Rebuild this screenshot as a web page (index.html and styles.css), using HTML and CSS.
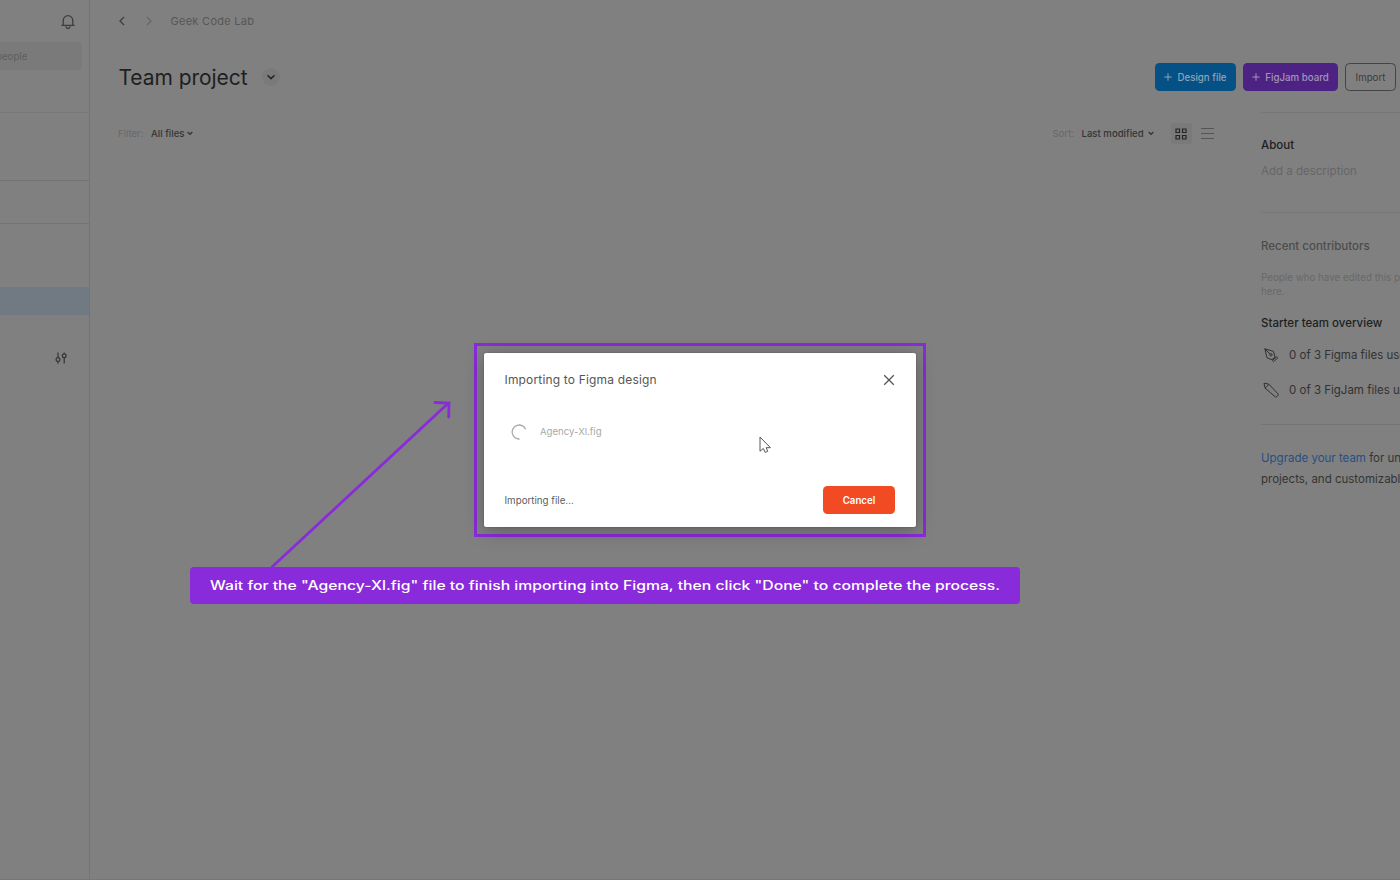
FILE: index.html
```html
<!DOCTYPE html>
<html lang="en">
<head>
<meta charset="utf-8">
<title>Team project</title>
<link rel="stylesheet" href="styles.css">
</head>
<body>
<div class="app">
  <aside class="sidebar">
    <div class="side-top">
      <svg class="bell" width="16" height="16" viewBox="0 0 16 16"><path d="M3.2 11.3V6.500a4.800 4.800 0 0 1 9.600 0v4.800M1.300 11.400h13.400M5.800 12.400c.3 1.500 1.200 2.100 2.200 2.100s1.900-.6 2.200-2.100"/></svg>
      <div class="search">people</div>
    </div>
    <div class="side-links"></div>
    <div class="side-drafts"></div>
    <div class="side-teams">
      <div class="selected"></div>
      <svg class="sliders" width="12" height="12" viewBox="0 0 12 12"><path d="M3 .5v5M3 9.700v2M9.200 6v5.500M9.200.4v1.300"/><circle cx="3" cy="7.600" r="1.900"/><circle cx="9.200" cy="3.800" r="1.900"/></svg>
    </div>
  </aside>
  <div class="page">
    <nav class="crumbs">
      <svg width="8" height="10" viewBox="0 0 8 10"><path d="M6 1 2 5l4 4"/></svg>
      <svg class="next" width="8" height="10" viewBox="0 0 8 10"><path d="m2 1 4 4-4 4"/></svg>
      <span>Geek Code Lab</span>
    </nav>
    <header class="header">
      <h1>Team project</h1>
      <span class="round"><svg width="10" height="8" viewBox="0 0 10 8"><path d="m1.500 2.200 3.500 3.400 3.500-3.400"/></svg></span>
      <div class="actions">
        <button class="btn blue"><svg width="8" height="8" viewBox="0 0 8 8"><path d="M4 .3v7.400M.3 4h7.400"/></svg><span>Design file</span></button>
        <button class="btn violet"><svg width="8" height="8" viewBox="0 0 8 8"><path d="M4 .3v7.400M.3 4h7.400"/></svg><span>FigJam board</span></button>
        <button class="btn outline"><span>Import</span></button>
      </div>
    </header>
    <div class="columns">
      <main class="files">
        <div class="filters">
          <span class="faint">Filter:</span>
          <span class="choice filter">All files</span>
          <svg class="caret" width="6" height="5" viewBox="0 0 6 5"><path d="m.6 1 2.400 2.300L5.400 1"/></svg>
          <span class="faint sort-label">Sort:</span>
          <span class="choice sort">Last modified</span>
          <svg class="caret" width="6" height="5" viewBox="0 0 6 5"><path d="m.6 1 2.400 2.300L5.400 1"/></svg>
          <span class="grid-view"><svg width="12" height="12" viewBox="0 0 12 12"><path d="M1 1h3.500v3.500H1zM7.500 1H11v3.500H7.500zM1 7.500h3.500V11H1zM7.500 7.500H11V11H7.500z"/></svg></span>
          <svg class="list-view" width="13" height="11" viewBox="0 0 13 11"><path d="M0 .5h13M0 5.500h13M0 10.500h13"/></svg>
        </div>
      </main>
      <aside class="details">
        <section class="about">
          <h2>About</h2>
          <p>Add a description</p>
        </section>
        <section class="team">
          <h3>Recent contributors</h3>
          <p class="note">People who have edited this project<br>here.</p>
          <h2 class="overview">Starter team overview</h2>
          <div class="quota">
            <svg width="16" height="16" viewBox="0 0 16 16"><path d="m1.800 1.800 8.700 2.600 1.500 5.800-3 2.500L4 10.800zM1.800 1.800l5.400 5.400M9.300 13.500l4.300-3.800 1 1.400-4.100 3.500z"/><circle cx="8" cy="7.800" r="1.100"/></svg>
            <span>0 of 3 Figma files used</span>
          </div>
          <div class="quota jam">
            <svg width="16" height="16" viewBox="0 0 16 16"><path d="m1 1.200 4.800.9 9.100 9.600c1.200 1.500-1.300 4.200-2.900 2.900L2 6zM2.200 6 6 2.300"/></svg>
            <span>0 of 3 FigJam files used</span>
          </div>
        </section>
        <p class="upgrade"><a>Upgrade your team</a> for unlimited<br>projects, and customizable</p>
      </aside>
    </div>
  </div>
</div>

<div class="highlight">
  <div class="dialog">
    <div class="dialog-head">
      <span class="dialog-title">Importing to Figma design</span>
      <svg width="12" height="12" viewBox="0 0 12 12"><path d="m1.200 1.200 9.600 9.600m0-9.600-9.600 9.600"/></svg>
    </div>
    <div class="dialog-file">
      <svg width="16" height="16" viewBox="0 0 16 16"><path d="M14.600 5.200A7 7 0 1 0 8.600 15"/></svg>
      <span>Agency-Xl.fig</span>
    </div>
    <div class="dialog-foot">
      <span class="status">Importing file...</span>
      <button class="cancel"><span>Cancel</span></button>
    </div>
  </div>
</div>
<svg class="cursor" width="13" height="18" viewBox="0 0 13 18"><path d="M1 1v14.200l3.300-2.700 1.900 3.900 2.500-1.100-1.500-3.600h4.200z"/></svg>
<svg class="arrow" width="190" height="176" viewBox="0 0 190 176"><path d="M6 172 182.500 8M169 7.500l14 .5-.3 14"/></svg>
<div class="caption">
  <svg width="790" height="24" viewBox="0 0 790 24"><text x="0" y="16.500" textLength="790" lengthAdjust="spacingAndGlyphs">Wait for the "Agency-Xl.fig" file to finish importing into Figma, then click "Done" to complete the process.</text></svg>
</div>
</body>
</html>
```

FILE: styles.css
```css
* { box-sizing: border-box; }
body { margin: 0; width: 1400px; height: 880px; overflow: hidden; background: #808080; font-family: Inter, "Liberation Sans", sans-serif; color: #2b2b2b; }
h1, h2, h3, p { margin: 0; }
svg { display: block; flex: none; fill: none; stroke: currentColor; }
button { font: inherit; border: 0; padding: 0; }
.app { display: flex; width: 1400px; height: 880px; overflow: hidden; border-bottom: 1px solid #777; }
.sidebar { width: 90px; flex: none; border-right: 1px solid #747474; }
.side-top { height: 113px; padding-top: 14px; border-bottom: 1px solid #787878; }
.bell { margin-left: 60px; color: #3d3d3d; stroke-width: 1.3; }
.search { margin-top: 12px; width: 82px; height: 28px; border-radius: 0 4px 4px 0; background: #7a7a7a; color: #5e5e5e; font-size: 9.700px; line-height: 29px; text-indent: -4px; overflow: hidden; }
.side-links { height: 68px; border-bottom: 1px solid #747474; }
.side-drafts { height: 43px; border-bottom: 1px solid #747474; }
.side-teams { padding-top: 63px; }
.selected { height: 28px; background: #717a82; }
.sliders { margin: 37px 0 0 55px; color: #333; stroke-width: 1.200; }
.page { flex: 1; min-width: 0; }
.crumbs { display: flex; align-items: center; height: 42px; padding-left: 28px; color: #3c3c3c; font-size: 11px; }
.crumbs svg { stroke-width: 1.300; }
.crumbs .next { margin-left: 19px; color: #666; }
.crumbs span { margin-left: 17.500px; color: #575757; letter-spacing: .28px; }
.header { display: flex; align-items: center; height: 70px; padding: 0 4px 0 28.500px; }
.header h1 { width: 129px; white-space: nowrap; font-size: 21px; font-weight: 400; line-height: 29px; padding-top: 1px; color: #1f1f1f; letter-spacing: -.05px; }
.round { display: flex; align-items: center; justify-content: center; width: 18px; height: 18px; margin-left: 14px; border-radius: 50%; background: #7a7a7a; color: #252525; }
.round svg { stroke-width: 1.500; }
.actions { display: flex; gap: 7px; margin-left: auto; }
.btn { display: flex; align-items: center; justify-content: center; gap: 5px; height: 28px; border-radius: 4.500px; font-size: 9.700px; font-weight: 500; color: #8fa5b5; }
.blue { width: 81px; background: #055084; }
.violet { width: 95px; background: #4c2382; color: #a493b8; }
.outline { width: 51px; border: 1.500px solid #444; background: none; color: #3b3b3b; font-weight: 400; }
.columns { display: flex; }
.files { width: 1128px; flex: none; padding: 11px 0 0 28px; }
.filters { display: flex; align-items: center; height: 21px; font-size: 9.600px; color: #343434; }
.filters > span:not(.grid-view) { line-height: 14px; padding-top: 1px; }
.faint { color: #686868; width: 33px; }
.choice { font-weight: 500; }
.filter { width: 33px; white-space: nowrap; }
.caret { margin-left: 3px; stroke-width: 1.200; }
.sort-label { margin-left: 859.500px; width: 29px; }
.sort { width: 63px; white-space: nowrap; }
.grid-view { display: flex; align-items: center; justify-content: center; width: 21px; height: 21px; margin-left: 17px; border-radius: 3px; background: #7a7a7a; color: #252525; }
.grid-view svg { stroke-width: 1.200; }
.list-view { margin-left: 9px; color: #555; }
.details { flex: 1; min-width: 0; margin-left: 43px; overflow: hidden; white-space: nowrap; font-size: 11.500px; }
.about { height: 101px; padding-top: 23px; border-top: 1px solid #777; border-bottom: 1px solid #777; }
.details h2 { font-size: 11.500px; font-weight: 500; line-height: 18px; color: #1e1e1e; }
.about p { margin-top: 8px; line-height: 18px; color: #666; }
.team { height: 212px; padding-top: 24px; border-bottom: 1px solid #747474; }
.details h3 { font-size: 11.500px; font-weight: 500; line-height: 18px; color: #4c4c4c; }
.note { margin-top: 16px; font-size: 9.800px; line-height: 14px; color: #686868; }
.details .overview { margin-top: 15px; }
.quota { display: flex; align-items: center; gap: 10px; height: 18px; margin-top: 14px; padding-left: 2px; color: #323232; }
.jam { margin-top: 17px; }
.upgrade { margin-top: 23px; line-height: 21px; color: #343434; }
.upgrade a { color: #284f82; }

.highlight { position: absolute; left: 474px; top: 343px; width: 452px; height: 194px; padding: 7px; border: 3px solid #8a2bdb; }
.dialog { width: 432px; height: 173.500px; padding: 18px 21px 0 20.500px; border-radius: 2px; background: #fff; box-shadow: 0 4px 20px rgba(0,0,0,.26), 0 0 2px rgba(0,0,0,.25); }
.dialog-head { display: flex; align-items: center; justify-content: space-between; height: 17px; color: #555; }
.dialog-head svg { stroke-width: 1.300; }
.dialog-title { font-size: 12px; letter-spacing: .17px; }
.dialog-file { display: flex; align-items: center; gap: 13.500px; height: 20px; margin-top: 33.500px; padding-left: 6px; color: #a8a8a8; font-size: 9.600px; }
.dialog-file svg { stroke-width: 1.300; }
.dialog-foot { display: flex; align-items: center; justify-content: space-between; height: 28px; margin-top: 44.500px; font-size: 9.750px; color: #5c5c5c; }
.cancel { width: 72px; height: 28px; border-radius: 4.500px; background: #f24a22; color: #fff; font-size: 9.700px; font-weight: 600; }
.cursor { position: absolute; left: 759px; top: 436px; fill: #fff; color: #55555f; }
.arrow { position: absolute; left: 266px; top: 395px; color: #8a2bdb; stroke-width: 2.800; stroke-linecap: round; }
.caption { position: absolute; left: 190px; top: 567px; width: 830px; height: 37px; padding: 6px 20px; border-radius: 4px; background: #8a2bdb; }
.caption text { fill: #fff; stroke: none; font-size: 12.500px; font-weight: 500; }
```
